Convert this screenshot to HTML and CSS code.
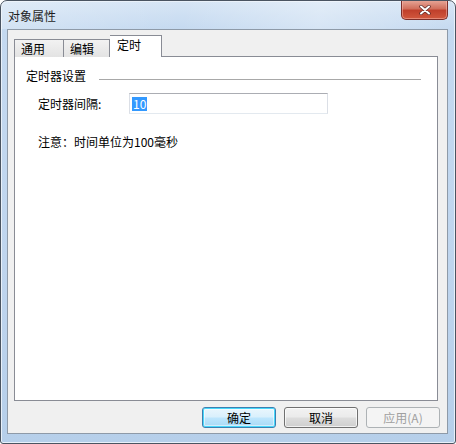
FILE: index.html
```html
<!DOCTYPE html>
<html>
<head>
<meta charset="utf-8">
<link rel="stylesheet" href="styles.css">
</head>
<body>
<div class="window">
  <div class="titlebar">
    <span class="title">对象属性</span>
    <div class="close">
      <svg width="14" height="10" viewBox="0 0 14 10"><path d="M3 1.5 L11 8.5 M11 1.5 L3 8.5" stroke="#5a2a28" stroke-width="3.4" stroke-linecap="round"/><path d="M3 1.5 L11 8.5 M11 1.5 L3 8.5" stroke="#ffffff" stroke-width="2" stroke-linecap="round"/></svg>
    </div>
  </div>
  <div class="client">
    <div class="tabs">
      <div class="tab">通用</div>
      <div class="tab">编辑</div>
      <div class="tab active">定时</div>
    </div>
    <div class="panel">
      <div class="group-head">
        <span>定时器设置</span>
        <div class="group-line"></div>
      </div>
      <div class="field-row">
        <span class="label">定时器间隔:</span>
        <div class="input"><span class="sel">10</span></div>
      </div>
      <div class="note">注意：时间单位为100毫秒</div>
    </div>
    <div class="buttons">
      <div class="btn default">确定</div>
      <div class="btn">取消</div>
      <div class="btn disabled">应用(A)</div>
    </div>
  </div>
</div>
</body>
</html>
```
FILE: styles.css
```css
html, body {
  margin: 0;
  padding: 0;
  background: #ffffff;
}
body {
  font-family: "Noto Sans CJK SC", "Liberation Sans", sans-serif;
  font-size: 12px;
  color: #000;
}
.window {
  width: 456px;
  height: 444px;
  box-sizing: border-box;
  border: 1px solid #4a5461;
  border-radius: 7px 7px 3px 3px;
  background: linear-gradient(to bottom, #d6e5f5 0px, #c4d9f0 30px, #bfd5ee 60%, #b6cfea 100%);
  display: flex;
  flex-direction: column;
  overflow: hidden;
  box-shadow: inset 0 0 0 1px #e8f0f9;
}
.titlebar {
  height: 28px;
  display: flex;
  justify-content: space-between;
  align-items: flex-start;
  padding-left: 7px;
  padding-right: 7px;
  background: linear-gradient(100deg, rgba(255,255,255,0.25) 0%, rgba(255,255,255,0) 40%, rgba(255,255,255,0.3) 70%, rgba(255,255,255,0) 100%);
}
.title {
  margin-top: 6px;
  line-height: 17px;
  color: #1e1e1e;
}
.close {
  width: 47px;
  height: 20px;
  margin-top: -1px;
  box-sizing: border-box;
  border: 1px solid #7b2e2a;
  border-top: none;
  border-radius: 0 0 5px 5px;
  background: linear-gradient(to bottom, #e8a99b 0%, #d1705d 45%, #c0402c 55%, #d1583e 100%);
  display: flex;
  align-items: center;
  justify-content: center;
  box-shadow: inset 0 0 0 1px rgba(255,200,190,0.45);
}
.client {
  margin: 0 7px 9px 6px;
  flex: 1;
  background: #f0f0f0;
  border: 1px solid #8e9aa8;
  display: flex;
  flex-direction: column;
  padding: 6px 9px 5px 6px;
}
.tabs {
  display: flex;
  align-items: flex-end;
  height: 21px;
  margin-bottom: -1px;
  position: relative;
  z-index: 1;
}
.tab {
  height: 18px;
  box-sizing: border-box;
  border: 1px solid #898c95;
  border-bottom: none;
  border-right: none;
  background: linear-gradient(to bottom, #f2f2f2, #e3e3e3);
  padding: 0 6px;
  width: 49px;
  line-height: 18px;
  font-size: 12px;
}
.tab:nth-child(2) {
  width: 47px;
  border-right: 1px solid #898c95;
}
.tab.active {
  height: 22px;
  width: 52px;
  background: #ffffff;
  border-right: 1px solid #898c95;
  border-left: none;
  margin-left: 0;
  padding-left: 7px;
  line-height: 18px;
}
.panel {
  flex: 1;
  background: #ffffff;
  border: 1px solid #898c95;
  padding: 11px 16px 0 11px;
}
.group-head {
  display: flex;
  align-items: center;
  height: 16px;
  line-height: 16px;
}
.group-line {
  flex: 1;
  height: 1px;
  background: #a8a8a8;
  margin-left: 13px;
  margin-top: 6px;
}
.field-row {
  display: flex;
  align-items: center;
  margin-top: 9px;
  padding-left: 12px;
}
.label {
  width: 91px;
  line-height: 16px;
}
.input {
  width: 199px;
  height: 21px;
  box-sizing: border-box;
  border: 1px solid #abadb3;
  border-left-color: #dbdfe6;
  border-right-color: #dbdfe6;
  border-bottom-color: #e3e9ef;
  display: flex;
  align-items: center;
  padding-left: 2px;
}
.sel {
  background: #3399ff;
  color: #ffffff;
  line-height: 14px;
  padding: 0 1px;
}
.note {
  margin-top: 20px;
  padding-left: 12px;
  line-height: 16px;
}
.buttons {
  display: flex;
  justify-content: flex-end;
  gap: 8px;
  margin-top: 6px;
  margin-right: -2px;
}
.btn {
  width: 74px;
  height: 21px;
  box-sizing: border-box;
  border: 1px solid #707070;
  border-radius: 3px;
  background: linear-gradient(to bottom, #f2f2f2 0%, #ebebeb 48%, #dddddd 52%, #cfcfcf 100%);
  box-shadow: inset 0 0 0 1px rgba(255,255,255,0.7);
  text-align: center;
  line-height: 19px;
}
.btn.default {
  border-color: #3c7fb1;
  box-shadow: inset 0 0 0 1px #48d8fb, inset 0 0 0 2px rgba(255,255,255,0.5);
  background: linear-gradient(to bottom, #eaf6fd 0%, #d9f0fc 48%, #bee6fd 52%, #a7d9f5 100%);
}
.btn.disabled {
  border-color: #adb2b5;
  background: #f4f4f4;
  box-shadow: none;
  color: #a0a0a0;
}
```
